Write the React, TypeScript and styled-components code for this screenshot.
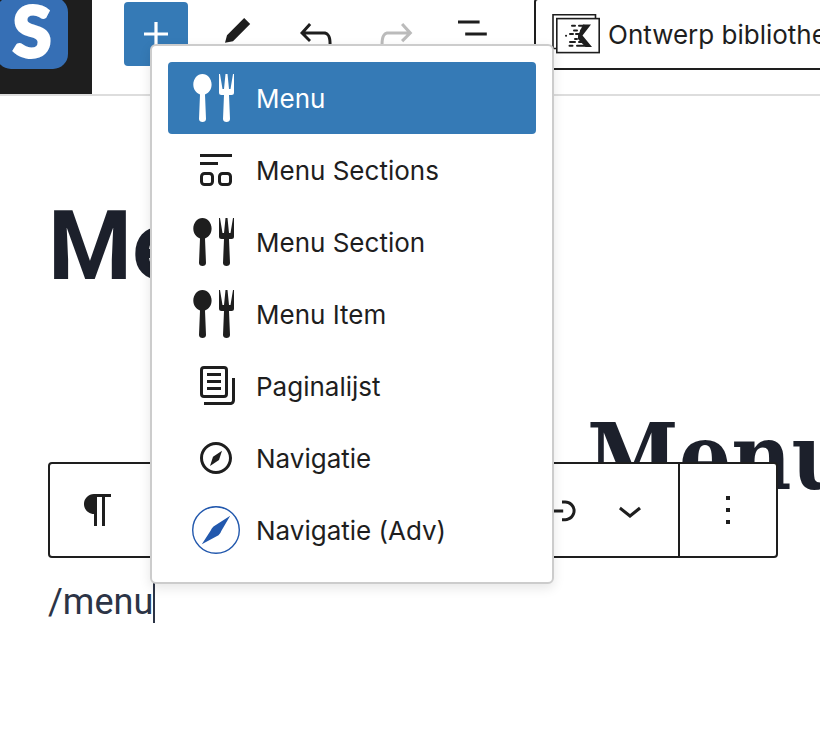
import React from "react";
import styled, { createGlobalStyle } from "styled-components";

const ink = "#1e1e1e";
const accent = "#357ab6";
const uiFont = `Inter, "Liberation Sans", sans-serif`;

const GlobalStyle = createGlobalStyle`
  *, *::before, *::after { box-sizing: border-box; }
  body { margin: 0; background: #fff; color: ${ink}; font-family: ${uiFont}; }
  button, input { font: inherit; color: inherit; }
  button { cursor: pointer; }
`;

const Editor = styled.div`
  position: relative;
  min-height: 100vh;
  overflow: hidden;
`;

const Header = styled.header`
  display: flex;
  height: 96px;
  border-bottom: 2px solid #ddd;
`;

const SiteLink = styled.a`
  flex: none;
  width: 92px;
  height: 94px;
  background: ${ink};
  overflow: hidden;
`;

const SiteLogo = styled.svg`
  display: block;
  width: 92px;
  height: 94px;
`;

const Tools = styled.div`
  display: flex;
  flex: none;
  align-items: flex-start;
  gap: 16px;
  padding: 2px 24px 0 32px;
`;

const ToolButton = styled.button<{ $primary?: boolean }>`
  display: flex;
  align-items: center;
  justify-content: center;
  width: 64px;
  height: 64px;
  padding: 0;
  border: 0;
  border-radius: 4px;
  background: ${(p) => (p.$primary ? accent : "transparent")};
  color: ${(p) => (p.$primary ? "#fff" : ink)};
  &:disabled { color: #bbb; }
`;

const Icon = styled.svg<{ $size?: number }>`
  display: block;
  flex: none;
  width: ${(p) => p.$size ?? 48}px;
  height: ${(p) => p.$size ?? 48}px;
  fill: currentColor;
`;

const LibraryButton = styled.button`
  display: flex;
  flex: none;
  align-items: center;
  gap: 8px;
  height: 72px;
  margin: -2px 0 0 2px;
  padding: 0 16px;
  border: 2px solid ${ink};
  border-radius: 4px;
  background: #fff;
  font-size: 26px;
  white-space: nowrap;
`;

const LibraryIcon = styled.svg`
  flex: none;
  width: 48px;
  height: 40px;
`;

const Canvas = styled.main`
  padding: 94px 48px 0;
  color: #1c202b;
`;

const Title = styled.h1`
  margin: 0;
  font: 700 96px/112px Roboto, sans-serif;
`;

const MenuHeading = styled.h2`
  margin: 99px -48px 64px 539px;
  font: 700 92px/112px "DejaVu Serif Condensed", "DejaVu Serif", serif;
  white-space: nowrap;
`;

const Block = styled.div`
  position: relative;
  display: flex;
  align-items: center;
  height: 50px;
  color: #2c3446;
`;

const BlockInput = styled.input`
  field-sizing: content;
  padding: 0;
  border: 0;
  outline: 0;
  background: none;
  font: 400 36px/48px Roboto, sans-serif;
`;

const Caret = styled.span`
  width: 2px;
  height: 42px;
  background: currentColor;
`;

const BlockToolbar = styled.div`
  position: absolute;
  left: 0;
  bottom: 69px;
  display: flex;
  width: 730px;
  height: 96px;
  border: 2px solid ${ink};
  border-radius: 4px;
  background: #fff;
  color: ${ink};
`;

const ToolbarGroup = styled.div<{ $grow?: boolean; $end?: boolean }>`
  display: flex;
  flex: ${(p) => (p.$grow ? 1 : "none")};
  justify-content: ${(p) => (p.$end ? "flex-end" : "flex-start")};
  padding-right: ${(p) => (p.$end ? 12 : 0)}px;
  & + & { border-left: 2px solid ${ink}; }
`;

const BlockButton = styled.button<{ $width: number }>`
  display: flex;
  align-items: center;
  justify-content: center;
  width: ${(p) => p.$width}px;
  height: 100%;
  padding: 0;
  border: 0;
  background: none;
`;

const Popover = styled.div`
  position: absolute;
  top: 44px;
  left: 150px;
  width: 404px;
  padding: 16px;
  border: 2px solid #ccc;
  border-radius: 6px;
  background: #fff;
  box-shadow: 0 4px 12px rgba(0, 0, 0, 0.1);
`;

const Option = styled.button<{ $active?: boolean }>`
  display: flex;
  align-items: center;
  gap: 16px;
  width: 100%;
  height: 72px;
  padding: 0 24px;
  border: 0;
  border-radius: 4px;
  background: ${(p) => (p.$active ? accent : "transparent")};
  color: ${(p) => (p.$active ? "#fff" : ink)};
  font-size: 26px;
  line-height: 32px;
  white-space: nowrap;
  text-align: left;
`;

const OptionLabel = styled.span`
  padding-top: 2px;
`;

const Food = () => (
  <Icon viewBox="0 0 48 48" aria-hidden="true">
    <path d="M10.4 0C15.5 0 19.600 4.700 19.600 10.500C19.600 15.300 16.800 19 13 20.500L14 45C14 47 12.500 48 10.500 48S7 47 7 45L8 20.500C4.200 19 1.300 15.300 1.300 10.500C1.300 4.700 5.400 0 10.400 0Z" />
    <path d="M27 0h1l2.500 15h1.500L33.500 0h2l1.500 15h1.500L41 0h1v18.500q0 2.500-2.500 2.500H37l1 24c0 2-1.500 3-3.500 3S31 47 31 45l1-24h-2.500Q27 21 27 18.500Z" />
  </Icon>
);

const Sections = () => (
  <Icon viewBox="0 0 24 24" aria-hidden="true">
    <path d="M4 4h16v1.500H4zM4 8h9v1.500H4z" />
    <rect x="4.750" y="13.750" width="5.500" height="5.500" rx="1.500" fill="none" stroke="currentColor" strokeWidth="1.500" />
    <rect x="13.750" y="13.750" width="5.500" height="5.500" rx="1.500" fill="none" stroke="currentColor" strokeWidth="1.500" />
  </Icon>
);

const Pages = () => (
  <Icon viewBox="0 0 24 24" aria-hidden="true">
    <path d="M14.5 5.5h-7V7h7V5.5ZM7.5 9h7v1.5h-7V9Zm7 3.5h-7V14h7v-1.5Z" />
    <path fillRule="evenodd" d="M16 2H6a2 2 0 0 0-2 2v12a2 2 0 0 0 2 2h10a2 2 0 0 0 2-2V4a2 2 0 0 0-2-2ZM6 3.500h10a.5.5 0 0 1 .5.5v12a.5.5 0 0 1-.5.5H6a.5.5 0 0 1-.5-.5V4a.5.5 0 0 1 .5-.5Z" />
    <path d="M20 8v11c0 .69-.31 1-.999 1H6v1.500h13.001c1.520 0 2.499-.982 2.499-2.500V8H20Z" />
  </Icon>
);

const Compass = () => (
  <Icon viewBox="0 0 24 24" aria-hidden="true">
    <path d="M12 4c-4.400 0-8 3.600-8 8s3.600 8 8 8 8-3.600 8-8-3.600-8-8-8zm0 14.500c-3.600 0-6.500-2.900-6.500-6.500S8.400 5.500 12 5.500s6.500 2.900 6.500 6.500-2.900 6.500-6.500 6.500zM9 16l4.500-3L15 8.400l-4.500 3L9 16z" />
  </Icon>
);

const CompassAdvanced = () => (
  <Icon viewBox="0 0 48 48" aria-hidden="true">
    <circle cx="24" cy="24" r="23.300" fill="none" stroke="#2258ad" strokeWidth="1.400" />
    <path fill="#2258ad" d="M38.200 9.800 21.500 20.600Q19.800 22 18.700 24.500L9.800 38.200 26.500 29.200Q28.600 27.500 29.300 25Z" />
  </Icon>
);

const options = [
  { label: "Menu", Glyph: Food },
  { label: "Menu Sections", Glyph: Sections },
  { label: "Menu Section", Glyph: Food },
  { label: "Menu Item", Glyph: Food },
  { label: "Paginalijst", Glyph: Pages },
  { label: "Navigatie", Glyph: Compass },
  { label: "Navigatie (Adv)", Glyph: CompassAdvanced },
];

const tools = [
  { label: "Blok toevoegen", size: 48, primary: true, path: "M18 11.200h-5.200V6h-1.600v5.200H6v1.600h5.200V18h1.600v-5.200H18z" },
  { label: "Gereedschap", size: 40, path: "M16.900 2.400L20.500 6 10.200 16.300 5.400 17.300 6.600 12.700zM4 20.800h8v-1.500H4v1.500z" },
  { label: "Ongedaan maken", size: 48, path: "M18.300 11.700c-.6-.6-1.400-.9-2.300-.9H6.700l2.900-3.300-1.100-1-4.500 5L8.500 16l1-1-2.700-2.700H16c.5 0 .9.2 1.300.5 1 1 1 3.400 1 4.500v.3h1.500v-.2c0-1.500 0-4.300-1.500-5.700z" },
  { label: "Opnieuw", size: 48, disabled: true, path: "M15.600 6.500l-1.100 1 2.900 3.300H8c-.9 0-1.700.3-2.300.9-1.400 1.500-1.400 4.200-1.400 5.600v.2h1.500v-.3c0-1.100 0-3.500 1-4.500.3-.3.7-.5 1.300-.5h9.200L14.500 15l1.100 1.100 4.600-4.600-4.600-5z" },
  { label: "Lijstweergave", size: 48, path: "M13.800 5.200H3v1.500h10.800V5.200zm-3.600 12v1.500H21v-1.500H10.200zm7.200-6H6.600v1.500h10.800v-1.500z" },
];

export default function App() {
  return (
    <Editor>
      <GlobalStyle />
      <Header>
        <SiteLink href="#" aria-label="Dashboard">
          <SiteLogo viewBox="0 0 92 94" aria-hidden="true">
            <rect x="-4" y="-3" width="72" height="72" rx="15" fill="#366fb5" />
            <text x="32" y="57" textAnchor="middle" fill="#fff" stroke="#fff" strokeWidth="3" fontFamily="Lato" fontWeight="900" fontSize="70">S</text>
          </SiteLogo>
        </SiteLink>
        <Tools role="toolbar" aria-label="Documentgereedschap">
          {tools.map((t) => (
            <ToolButton key={t.label} type="button" aria-label={t.label} $primary={t.primary} disabled={t.disabled}>
              <Icon viewBox="0 0 24 24" $size={t.size} aria-hidden="true"><path d={t.path} /></Icon>
            </ToolButton>
          ))}
        </Tools>
        <LibraryButton type="button">
          <LibraryIcon viewBox="0 0 48 40" aria-hidden="true">
            <path d="M5 34.500H1V.8h42.500V4" fill="none" stroke={ink} strokeWidth="1.600" />
            <rect x="4.800" y="4.600" width="42.400" height="34" fill="#fff" stroke={ink} strokeWidth="1.600" />
            <path d="M31 10.500h8l-8.500 11 9.500 11.500h-6.500L26 25v-3.500Z" fill={ink} />
            <path d="M20 11.700h3M27 11.700h5M22 16.500h3M29 16.500h3M18 20h3M24 20h5M14 21.700h.1M23 25h2M28 25h3M18 28h5M27 28h4M17.500 31.700h3M25 31.700h8" stroke={ink} strokeWidth="2" strokeLinecap="round" />
          </LibraryIcon>
          Ontwerp bibliotheek
        </LibraryButton>
      </Header>

      <Canvas>
        <Title>Menu</Title>
        <MenuHeading>Menu</MenuHeading>
        <Block>
          <BlockInput aria-label="Blok" defaultValue="/menu" />
          <Caret />
          <BlockToolbar role="toolbar" aria-label="Blokgereedschap">
            <ToolbarGroup $grow>
              <BlockButton type="button" aria-label="Paragraaf" $width={96}>
                <Icon viewBox="0 0 24 24"><path d="m9.996 14v-.225l.004 0v6.225h1.500v-14.500h2.500v14.500h1.500v-14.500h3v-1.500h-8.504c-2.761 0-5 2.239-5 5 0 2.761 2.239 5 5 5z" /></Icon>
              </BlockButton>
            </ToolbarGroup>
            <ToolbarGroup $end>
              <BlockButton type="button" aria-label="Link" $width={72}>
                <Icon viewBox="0 0 24 24"><path d="M15.600 7.200H14v1.500h1.600c2 0 3.700 1.700 3.700 3.700s-1.700 3.700-3.700 3.700H14v1.500h1.600c2.800 0 5.200-2.300 5.200-5.200 0-2.900-2.300-5.200-5.200-5.200zM4.700 12.400c0-2 1.700-3.700 3.700-3.700H10V7.200H8.400c-2.900 0-5.200 2.300-5.200 5.200 0 2.900 2.300 5.200 5.200 5.200H10v-1.500H8.400c-2 0-3.700-1.700-3.700-3.700zm4.600.9h5.300v-1.500H9.300v1.500z" /></Icon>
              </BlockButton>
              <BlockButton type="button" aria-label="Meer" $width={72}>
                <Icon viewBox="0 0 24 24"><path d="M17.500 11.600L12 16l-5.500-4.400.9-1.200L12 14l4.500-3.600 1 1.200z" /></Icon>
              </BlockButton>
            </ToolbarGroup>
            <ToolbarGroup>
              <BlockButton type="button" aria-label="Opties" $width={96}>
                <Icon viewBox="0 0 24 24"><path d="M13 19h-2v-2h2v2zm0-6h-2v-2h2v2zm0-6h-2V5h2v2z" /></Icon>
              </BlockButton>
            </ToolbarGroup>
          </BlockToolbar>
        </Block>
      </Canvas>

      <Popover role="listbox" aria-label="Blokken">
        {options.map(({ label, Glyph }, i) => (
          <Option key={label} type="button" role="option" aria-selected={i === 0} $active={i === 0}>
            <Glyph />
            <OptionLabel>{label}</OptionLabel>
          </Option>
        ))}
      </Popover>
    </Editor>
  );
}
